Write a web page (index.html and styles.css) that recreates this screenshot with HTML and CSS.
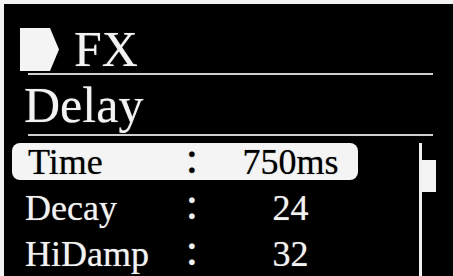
FILE: index.html
```html
<!DOCTYPE html>
<html>
<head>
<meta charset="utf-8">
<link rel="stylesheet" href="styles.css">
</head>
<body>
<div class="screen">
  <div class="header">
    <svg class="arrow" width="39" height="43" viewBox="0 0 39 43"><polygon points="0,0 30,0 39,21.5 30,43 0,43" fill="#f4f4f4"/></svg>
    <span class="title">FX</span>
  </div>
  <div class="rule"></div>
  <div class="subtitle">Delay</div>
  <div class="rule"></div>
  <div class="list-area">
    <div class="rows">
      <div class="row selected"><span class="label">Time</span><span class="colon">:</span><span class="value">750ms</span></div>
      <div class="row"><span class="label">Decay</span><span class="colon">:</span><span class="value">24</span></div>
      <div class="row"><span class="label">HiDamp</span><span class="colon">:</span><span class="value">32</span></div>
    </div>
    <div class="scrollbar"><div class="thumb"></div></div>
  </div>
</div>
</body>
</html>
```
FILE: styles.css
```css
html, body {
  margin: 0;
  padding: 0;
  background: #f2f2f2;
  overflow: hidden;
}
.screen {
  margin: 4px 0 0 4px;
  width: 449px;
  height: 272px;
  background: #000;
  color: #f2f2f2;
  font-family: "Liberation Serif", "Times New Roman", serif;
  overflow: hidden;
  padding-top: 22px;
  box-sizing: border-box;
  text-shadow: 0 0 1px rgba(242, 242, 242, 0.6);
}
.header {
  display: flex;
  align-items: center;
  height: 47px;
  padding-left: 16px;
}
.arrow {
  display: block;
  flex: none;
}
.title {
  font-size: 50px;
  line-height: 47px;
  margin-left: 15px;
}
.rule {
  margin-left: 24px;
  width: 405px;
  height: 2px;
  background: #cfcfcf;
}
.subtitle {
  font-size: 50px;
  line-height: 57px;
  padding-top: 2px;
  padding-left: 20px;
}
.list-area {
  display: flex;
  margin-top: 7px;
  padding-left: 8px;
}
.rows {
  display: flex;
  flex-direction: column;
  gap: 9px;
  width: 346px;
  flex: none;
}
.row {
  display: grid;
  grid-template-columns: 160px 14px 1fr;
  height: 37px;
  box-sizing: border-box;
  padding-top: 1px;
  padding-left: 13px;
  font-size: 36px;
  line-height: 36px;
  border-radius: 8px;
  white-space: nowrap;
}
.row.selected {
  background: #f4f4f4;
  color: #000;
  text-shadow: 0 0 1px rgba(0, 0, 0, 0.5);
}
.row.selected .label {
  padding-left: 3px;
}
.colon {
  text-align: center;
  font-size: 46px;
  line-height: 28px;
}
.value {
  text-align: center;
  padding-left: 24px;
}
.scrollbar {
  margin-left: 61px;
  width: 14px;
  height: 140px;
  border-left: 3px solid #f0f0f0;
  flex: none;
}
.thumb {
  margin-top: 17px;
  width: 14px;
  height: 32px;
  background: #f4f4f4;
}
```
